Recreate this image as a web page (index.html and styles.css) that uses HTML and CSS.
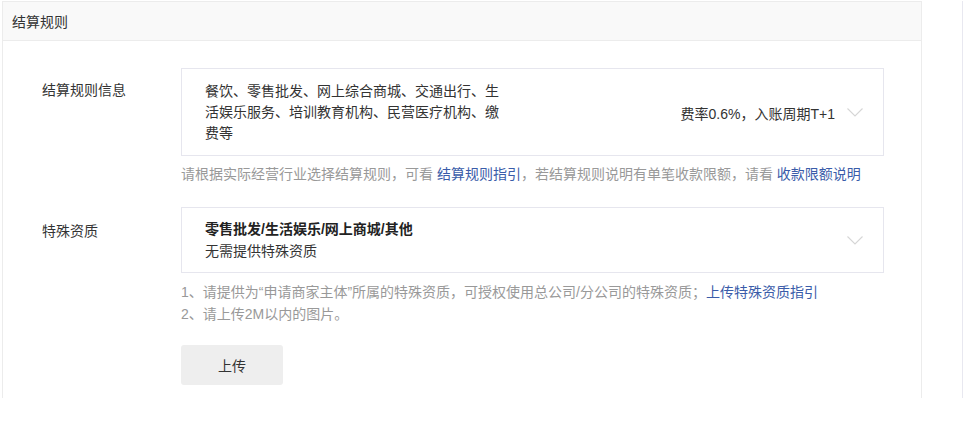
FILE: index.html
```html
<!DOCTYPE html>
<html lang="zh-CN">
<head>
<meta charset="utf-8">
<title>结算规则</title>
<link rel="stylesheet" href="styles.css">
</head>
<body>
<div class="page">
  <section class="card">
    <div class="card-header">结算规则</div>
    <div class="card-body">
      <div class="form-row row-rule">
        <div class="label">结算规则信息</div>
        <div class="field">
          <div class="select select-rule">
            <div class="select-main">餐饮、零售批发、网上综合商城、交通出行、生活娱乐服务、培训教育机构、民营医疗机构、缴费等</div>
            <div class="select-extra">费率0.6%，入账周期T+1</div>
            <svg class="chevron" width="16" height="9" viewBox="0 0 16 9"><path d="M0.5 0.5 L8 8 L15.5 0.5" fill="none" stroke="#d6d6d6" stroke-width="1.1"/></svg>
          </div>
          <p class="help">请根据实际经营行业选择结算规则，可看 <a class="link">结算规则指引</a>，若结算规则说明有单笔收款限额，请看 <a class="link">收款限额说明</a></p>
        </div>
      </div>
      <div class="form-row row-qual">
        <div class="label">特殊资质</div>
        <div class="field">
          <div class="select select-qual">
            <div class="select-main">
              <div class="qual-title">零售批发/生活娱乐/网上商城/其他</div>
              <div class="qual-desc">无需提供特殊资质</div>
            </div>
            <svg class="chevron" width="16" height="9" viewBox="0 0 16 9"><path d="M0.5 0.5 L8 8 L15.5 0.5" fill="none" stroke="#d6d6d6" stroke-width="1.1"/></svg>
          </div>
          <div class="help help-list">
            <p>1、请提供为“申请商家主体”所属的特殊资质，可授权使用总公司/分公司的特殊资质；<a class="link">上传特殊资质指引</a></p>
            <p>2、请上传2M以内的图片。</p>
          </div>
          <button class="btn">上传</button>
        </div>
      </div>
    </div>
  </section>
  <div class="side-line"></div>
</div>
</body>
</html>
```

FILE: styles.css
```css
* { box-sizing: border-box; }
html, body { margin: 0; padding: 0; background: #fff; }
body {
  font-family: "Liberation Sans", "Noto Sans CJK SC", sans-serif;
  font-size: 14px;
  color: #333;
}
.page {
  display: flex;
  align-items: flex-start;
  padding: 1px 0 0 2px;
}
.card {
  width: 920px;
  border: 1px solid #ececec;
  border-bottom: none;
  height: 397px;
}
.card-header {
  height: 39px;
  background: #f9f9f9;
  border-bottom: 1px solid #ececec;
  padding-left: 9px;
  display: flex;
  align-items: center;
  font-size: 14px;
  color: #333;
}
.card-body {
  padding: 27px 37px 13px 39px;
}
.form-row {
  display: flex;
}
.row-rule { margin-bottom: 22px; }
.label {
  width: 139px;
  flex: none;
  line-height: 21px;
  color: #333;
}
.row-rule .label { padding-top: 12px; }
.row-qual .label { padding-top: 14px; }
.field {
  width: 703px;
}
.select {
  border: 1px solid #e6e6ee;
  display: flex;
  align-items: center;
  padding-left: 23px;
  padding-right: 20px;
}
.select-rule { padding-top: 12px; padding-bottom: 11px; }
.select-rule .select-main {
  width: 300px;
  line-height: 21px;
}
.select-extra {
  margin-left: auto;
  margin-right: 12px;
  color: #333;
}
.select-qual { padding-top: 10px; padding-bottom: 10px; }
.select-qual .select-main {
  line-height: 22px;
}
.qual-title { font-weight: bold; color: #222; }
.select-qual .chevron { margin-left: auto; }
.chevron { flex: none; display: block; }
.help {
  margin: 8px 0 0;
  color: #999;
  line-height: 21px;
}
.help-list { line-height: 22px; }
.help-list p { margin: 0; }
.link { color: #3a5ca9; text-decoration: none; }
.btn {
  margin-top: 20px;
  width: 102px;
  height: 40px;
  border: none;
  border-radius: 3px;
  background: #eeeeee;
  font-family: inherit;
  font-size: 14px;
  color: #333;
  display: block;
}
.side-line {
  margin-left: 40px;
  width: 1px;
  height: 397px;
  background: #e8e8f0;
}
```
